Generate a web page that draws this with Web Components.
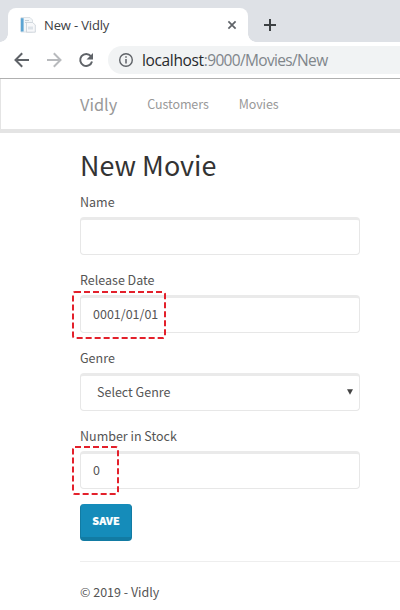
<!DOCTYPE html>
<html lang="en"><head><meta charset="utf-8"><title>New - Vidly</title>
<style>
body{margin:0;background:#fff;width:400px;height:610px;overflow:hidden;font-family:"Noto Sans CJK SC",sans-serif;color:#555}
</style></head><body>
<browser-window></browser-window>
<script>
const define=(name,html)=>customElements.define(name,class extends HTMLElement{
  constructor(){super();this.attachShadow({mode:'open'}).innerHTML=html;}
});

define('browser-tab',`<style>
:host{display:flex;align-items:center;position:relative;box-sizing:border-box;width:240px;height:34px;margin-left:8px;padding:0 10px 0 12px;background:#fff;border-radius:8px 8px 0 0;font:13px "Open Sans",sans-serif;color:#3c4043}
:host::before,:host::after{content:"";position:absolute;bottom:0;width:8px;height:8px}
:host::before{left:-8px;background:radial-gradient(circle at 0 0,transparent 7.5px,#fff 8px)}
:host::after{right:-8px;background:radial-gradient(circle at 100% 0,transparent 7.5px,#fff 8px)}
.t{flex:1;margin-left:8px;letter-spacing:-.15px;line-height:18px}
svg{display:block}
</style>
<svg width="16" height="16" viewBox="0 0 16 16"><path d="M1 .5h9l2.5 2.5v12H1z" fill="#f3f6f8" stroke="#d4dae0" stroke-width=".8"/><path d="M.8 1.2h2.8v13.3H.8z" fill="#5ba4d3"/><path d="M5 3.5h4M5 5.5h2" stroke="#c7d0d8"/><path d="M6.5 5.5h6l2.8 2.4v7.3H6.5z" fill="#f7f8fa" stroke="#c6ced6" stroke-width=".8"/><path d="M8 9.5h5v3H8z" fill="#dce2e8"/></svg>
<span class="t"><slot></slot></span>
<svg width="12" height="12" viewBox="0 0 12 12"><path d="M2.4 2.4l7.2 7.2M9.6 2.4L2.4 9.6" stroke="#5f6368" stroke-width="1.7"/></svg>`);

define('tab-strip',`<style>:host{display:flex;height:42px;background:#dee1e6;align-items:flex-end}svg{margin:0 0 11px 16px}</style>
<slot></slot><svg width="12" height="12" viewBox="0 0 12 12"><path d="M0 6h12M6 0v12" stroke="#3c4043" stroke-width="2"/></svg>`);

define('address-bar',`<style>
:host{display:flex;align-items:center;box-sizing:border-box;height:37px;background:#fff;border-bottom:1px solid #b0b0b0;padding-left:12px;overflow:hidden}
svg{display:block;flex:none}
.nav{display:flex;gap:12px}
.url{flex:none;display:flex;align-items:center;box-sizing:border-box;width:320px;height:28px;margin-left:12px;padding-left:8px;border-radius:14px 0 0 14px;background:#f1f3f4;color:#80868b;font:15.5px "Open Sans",sans-serif;letter-spacing:-.66px}
.url svg{margin-right:6px}
b{font-weight:400;color:#27292c;letter-spacing:-.35px}
</style>
<div class="nav">
<svg width="20" height="20" viewBox="0 0 20 20" fill="none" stroke="#5f6368" stroke-width="2"><path d="M17 10H4M10.2 3.3L3.5 10l6.7 6.7"/></svg>
<svg width="20" height="20" viewBox="0 0 20 20" fill="none" stroke="#b8babd" stroke-width="2"><path d="M3 10h13M9.8 3.3l6.7 6.7-6.7 6.7"/></svg>
<svg width="20" height="20" viewBox="0 0 20 20"><path d="M14.9 6.2A6 6 0 1 0 16 11.5" fill="none" stroke="#5f6368" stroke-width="2"/><path d="M17 3v6.5h-6.5z" fill="#5f6368"/></svg>
</div>
<div class="url"><svg width="20" height="20" viewBox="0 0 20 20"><circle cx="10" cy="10" r="6.3" fill="none" stroke="#5f6368" stroke-width="1.4"/><path d="M10 9v4.5M10 6.3v1.5" stroke="#5f6368" stroke-width="1.5"/></svg><span><b><slot name="host"></slot></b><slot></slot></span></div>`);

define('site-nav',`<style>
:host{display:flex;align-items:center;gap:30px;box-sizing:border-box;height:54px;border-left:1px solid #e4e4e4;border-bottom:4px solid #e4e4e4;padding-left:79px;color:#999;font-size:12.5px;line-height:20px}
::slotted(span){letter-spacing:-.1px}
::slotted([slot=brand]){font-size:16.4px;letter-spacing:0}
</style><slot name="brand"></slot><slot></slot>`);

define('form-field',`<style>
:host{display:block;position:relative;height:78px;font-size:12.5px;line-height:20px}
label{display:block;height:25px}
.box{display:flex;align-items:center;justify-content:space-between;box-sizing:border-box;height:38px;padding:0 12px 2px;border:1px solid #e7e7e7;border-top:3px solid #eaeaea;border-radius:4px;background:#fff}
:host([select]) .box{padding:0 6px 2px 16px}
svg{display:none}
:host([select]) svg{display:block}
</style><label><slot name="label"></slot></label><div class="box"><slot></slot><svg width="6" height="6" viewBox="0 0 6 6"><path d="M0 .2h6L3 5.8z" fill="#444"/></svg></div><slot name="mark"></slot>`);

define('highlight-mark',`<style>:host{position:absolute;display:block;left:-8px}svg{display:block;overflow:visible}rect{fill:none;stroke:#e3202b;stroke-width:2;stroke-dasharray:6 3}</style><svg><rect x="1" y="1" rx="2"/></svg>`);

define('save-button',`<style>:host{display:flex;align-items:center;justify-content:center;box-sizing:border-box;width:52px;height:37px;border:1px solid #127ba3;border-width:0 1px 4px;border-radius:4px;background:#158cba;color:#fff;font-size:10.7px;font-weight:900;-webkit-text-stroke:.2px #fff;line-height:18px}</style><slot></slot>`);

define('movie-page',`<style>
:host{display:block;width:280px;margin:15px 0 0 80px}
h2{margin:0 0 11px;font-size:26.9px;line-height:33px;font-weight:400;color:#333}
hr{height:1px;border:0;margin:20px -40px 20px 0;background:#eee}
footer{font-size:12.5px;line-height:20px}
</style><h2><slot name="title"></slot></h2><slot></slot><hr><footer><slot name="footer"></slot></footer>`);

define('browser-window',`<style>:host{display:block}
.date{top:21px}
.stock{top:20px}
</style>
<tab-strip><browser-tab>New - Vidly</browser-tab></tab-strip>
<address-bar><span slot="host">localhost</span>:9000/Movies/New</address-bar>
<site-nav><span slot="brand">Vidly</span><span>Customers</span><span>Movies</span></site-nav>
<movie-page><span slot="title">New Movie</span>
<form-field><span slot="label">Name</span></form-field>
<form-field><span slot="label">Release Date</span><span>0001/01/01</span><highlight-mark class="date" slot="mark" w="94" h="48"></highlight-mark></form-field>
<form-field select><span slot="label">Genre</span><span>Select Genre</span></form-field>
<form-field><span slot="label">Number in Stock</span><span>0</span><highlight-mark class="stock" slot="mark" w="47" h="49"></highlight-mark></form-field>
<save-button>SAVE</save-button>
<span slot="footer">© 2019 - Vidly</span></movie-page>`);

document.querySelector('browser-window').shadowRoot.querySelectorAll('highlight-mark').forEach(m=>{
  const w=m.getAttribute('w'),h=m.getAttribute('h'),s=m.shadowRoot.querySelector('svg'),r=s.firstChild;
  s.setAttribute('width',w);s.setAttribute('height',h);r.setAttribute('width',w-2);r.setAttribute('height',h-2);
});
</script></body></html>
